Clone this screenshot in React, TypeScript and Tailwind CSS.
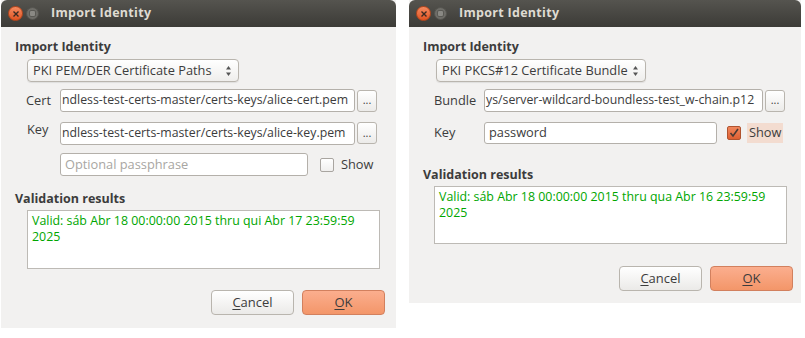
import React from "react";

const font = { fontFamily: '"Open Sans", "Noto Sans", "DejaVu Sans", sans-serif' };

function TitleBar() {
  return (
    <div className="h-[27px] rounded-t-[6px] bg-gradient-to-b from-[#55544f] to-[#3c3b37] flex items-center pl-[7px]">
      <div className="w-[15px] h-[15px] rounded-full bg-gradient-to-b from-[#f58a5f] to-[#e0531f] border border-[#b8461c] flex items-center justify-center">
        <svg width="8" height="8" viewBox="0 0 8 8">
          <path d="M1.5 1.5 L6.5 6.5 M6.5 1.5 L1.5 6.5" stroke="#3a2a22" strokeWidth="1.4" />
        </svg>
      </div>
      <div className="ml-[3px] w-[13px] h-[13px] rounded-full bg-[#6e6d68] border border-[#55544f] flex items-center justify-center">
        <div className="w-[7px] h-[7px] rounded-[2px] bg-[#8a8984] border border-[#5a5954]" />
      </div>
      <span className="ml-[12px] text-[12.5px] font-bold text-[#dfdbd2] tracking-[0.3px]">Import Identity</span>
    </div>
  );
}

function Combo({ text, width }: { text: string; width: string }) {
  return (
    <div
      className={`${width} h-[23px] rounded-[4px] border border-[#b9b5ae] bg-gradient-to-b from-[#ffffff] to-[#efeeec] shadow-[0_1px_1px_rgba(0,0,0,0.08)] flex items-center justify-between pl-[5px] pr-[6px] text-[12.8px] text-[#3c3c3c]`}
    >
      <span>{text}</span>
      <svg width="7" height="12" viewBox="0 0 7 12">
        <path d="M3.5 1 L6 4.5 L1 4.5 Z" fill="#555" />
        <path d="M3.5 11 L6 7.5 L1 7.5 Z" fill="#555" />
      </svg>
    </div>
  );
}

function PathInput({ text, width }: { text: string; width: string }) {
  return (
    <div
      className={`${width} h-[23px] rounded-[3px] border border-[#b4b0aa] bg-white overflow-hidden flex items-center pl-[1px] text-[12.3px] text-[#3c3c3c] whitespace-nowrap`}
    >
      <span>{text}</span>
    </div>
  );
}

function Dots() {
  return (
    <div className="ml-[2px] w-[20px] h-[22px] rounded-[3px] border border-[#b9b5ae] bg-gradient-to-b from-white to-[#ecebe9] flex items-center justify-center text-[11px] text-[#3c3c3c] leading-none pb-[2px]">
      ...
    </div>
  );
}

function Buttons() {
  return (
    <div className="flex gap-[8px]">
      <div className="w-[83px] h-[25px] rounded-[4px] border border-[#b9b5ae] bg-gradient-to-b from-white to-[#ebeae8] flex items-center justify-center text-[13px] text-[#3c3c3c]">
        <span>
          <span className="underline underline-offset-2">C</span>ancel
        </span>
      </div>
      <div className="w-[83px] h-[25px] rounded-[4px] border border-[#d2805e] bg-gradient-to-b from-[#fbae8e] to-[#f39669] flex items-center justify-center text-[13px] text-[#3c3c3c]">
        <span>
          <span className="underline underline-offset-2">O</span>K
        </span>
      </div>
    </div>
  );
}

function ResultBox({ text, height }: { text: string; height: string }) {
  return (
    <div
      className={`${height} border border-[#bdbab5] bg-white pl-[4px] pt-[2px] pr-[4px] text-[12.4px] leading-[16px] text-[#00a600]`}
    >
      {text}
    </div>
  );
}

function LeftWindow() {
  return (
    <div className="w-[395px] h-[328px] bg-[#f2f1f0] flex flex-col">
      <TitleBar />
      <div className="flex flex-col pl-[14px] pt-[12px] text-[12.8px] text-[#3c3c3c]">
        <div className="font-bold leading-[16px] text-[12.5px]">Import Identity</div>
        <div className="ml-[12px] mt-[4px]">
          <Combo text="PKI PEM/DER Certificate Paths" width="w-[212px]" />
        </div>
        <div className="flex items-center mt-[7px]">
          <span className="w-[45px] pl-[11px]">Cert</span>
          <PathInput text="ndless-test-certs-master/certs-keys/alice-cert.pem" width="w-[295px]" />
          <Dots />
        </div>
        <div className="flex mt-[10px]">
          <span className="w-[45px] pl-[12px] -mt-[2px]">Key</span>
          <PathInput text="ndless-test-certs-master/certs-keys/alice-key.pem" width="w-[295px]" />
          <Dots />
        </div>
        <div className="flex items-center mt-[8px] ml-[45px]">
          <div className="w-[248px] h-[23px] rounded-[3px] border border-[#b4b0aa] bg-white flex items-center pl-[4px] text-[#a8a6a2]">
            Optional passphrase
          </div>
          <div className="ml-[12px] w-[14px] h-[14px] rounded-[2px] border border-[#a9a5a0] bg-gradient-to-b from-white to-[#f0efee]" />
          <span className="ml-[7px]">Show</span>
        </div>
        <div className="font-bold leading-[16px] text-[12.5px] mt-[15px]">Validation results</div>
        <div className="ml-[12px] mt-[3px] w-[353px]">
          <ResultBox text="Valid: sáb Abr 18 00:00:00 2015 thru qui Abr 17 23:59:59 2025" height="h-[59px]" />
        </div>
        <div className="flex justify-end pr-[11px] mt-[21px]">
          <Buttons />
        </div>
      </div>
    </div>
  );
}

function RightWindow() {
  return (
    <div className="w-[392px] h-[303px] bg-[#f2f1f0] flex flex-col">
      <TitleBar />
      <div className="flex flex-col pl-[14px] pt-[12px] text-[12.8px] text-[#3c3c3c]">
        <div className="font-bold leading-[16px] text-[12.5px]">Import Identity</div>
        <div className="ml-[13px] mt-[4px]">
          <Combo text="PKI PKCS#12 Certificate Bundle" width="w-[210px]" />
        </div>
        <div className="flex items-center mt-[7px]">
          <span className="w-[61px] pl-[11px]">Bundle</span>
          <PathInput text="ys/server-wildcard-boundless-test_w-chain.p12" width="w-[279px]" />
          <Dots />
        </div>
        <div className="flex items-center mt-[10px]">
          <span className="w-[61px] pl-[11px]">Key</span>
          <div className="w-[233px] h-[22px] rounded-[3px] border border-[#b4b0aa] bg-white flex items-center pl-[4px]">
            password
          </div>
          <div className="ml-[10px] w-[14px] h-[14px] rounded-[2px] border border-[#b0532f] bg-gradient-to-b from-[#f0875d] to-[#df5f31] flex items-center justify-center">
            <svg width="10" height="10" viewBox="0 0 10 10">
              <path d="M1.5 5 L4 8 L9 1" stroke="#4a3a33" strokeWidth="1.6" fill="none" />
            </svg>
          </div>
          <span className="ml-[6px] px-[2px] bg-[#f3dcd0]">Show</span>
        </div>
        <div className="font-bold leading-[16px] text-[12.5px] mt-[23px]">Validation results</div>
        <div className="ml-[11px] mt-[3px] w-[353px]">
          <ResultBox text="Valid: sáb Abr 18 00:00:00 2015 thru qua Abr 16 23:59:59 2025" height="h-[58px]" />
        </div>
        <div className="flex justify-end pr-[8px] mt-[22px]">
          <Buttons />
        </div>
      </div>
    </div>
  );
}

export default function App() {
  return (
    <div className="w-[805px] h-[338px] bg-white flex items-start pl-[1px] gap-[13px]" style={font}>
      <LeftWindow />
      <RightWindow />
    </div>
  );
}
